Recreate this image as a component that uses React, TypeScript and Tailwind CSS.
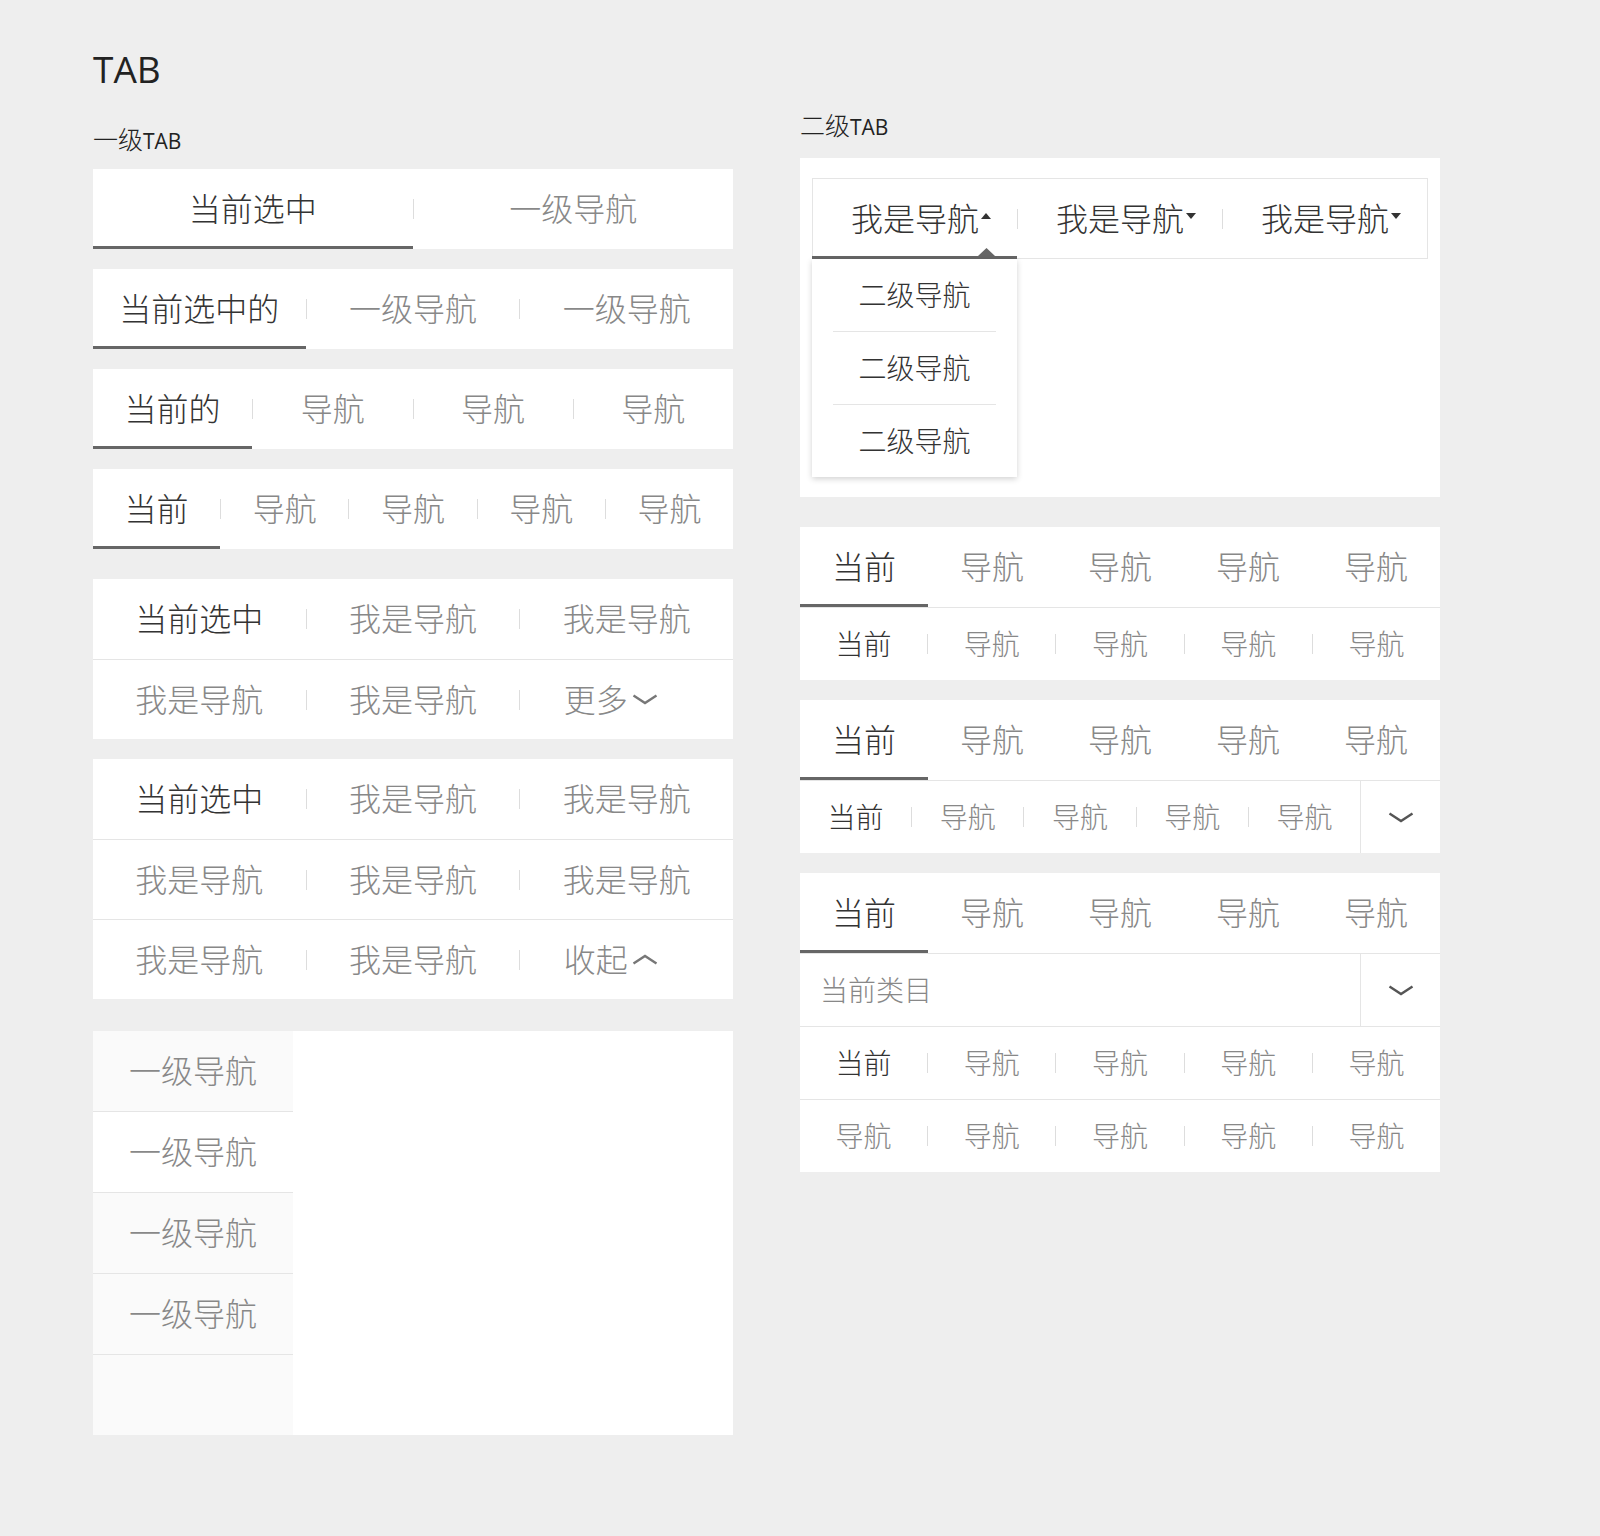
import { Fragment, type ReactNode } from "react"

const Sep = () => <div className="h-5 w-px shrink-0 bg-[#dddddd]" />

type RowProps = {
  items: ReactNode[]
  active?: number
  underline?: boolean
  sep?: boolean
  size?: string
  h?: string
  className?: string
}

const Row = ({ items, active = -1, underline = false, sep = true, size = "text-[32px]", h = "h-20", className = "" }: RowProps) => {
  return (
    <div className={`flex ${h} items-center bg-white ${className}`}>
      {items.map((t, i) => (
        <Fragment key={i}>
          {i > 0 && sep && <Sep />}
          <div
            className={`flex h-full min-w-0 flex-1 basis-0 items-center justify-center border-y-[3px] border-t-transparent ${size} ${
              i === active ? "text-[#333333]" : "text-[#888888]"
            } ${underline && i === active ? "border-b-[#666666]" : "border-b-transparent"}`}
          >
            {t}
          </div>
        </Fragment>
      ))}
    </div>
  )
}

const ChevronDown = ({ className = "" }: { className?: string }) => (
  <svg width="26" height="11" viewBox="0 0 26 11" className={className}>
    <path d="M1.5 1.5 L13 9 L24.5 1.5" fill="none" stroke="currentColor" strokeWidth="2.4" />
  </svg>
)

const ChevronUp = ({ className = "" }: { className?: string }) => (
  <svg width="26" height="11" viewBox="0 0 26 11" className={className}>
    <path d="M1.5 9.5 L13 2 L24.5 9.5" fill="none" stroke="currentColor" strokeWidth="2.4" />
  </svg>
)

const ChevronBox = () => (
  <div className="flex h-full w-[80px] shrink-0 items-center justify-center border-l border-[#e5e5e5] bg-white text-[#555555]">
    <ChevronDown />
  </div>
)

const More = ({ label, up }: { label: string; up?: boolean }) => (
  <div className="flex w-[126px] items-center">
    {label}
    {up ? <ChevronUp className="ml-1 text-[#777777]" /> : <ChevronDown className="ml-1 text-[#777777]" />}
  </div>
)

const Tri = ({ up }: { up?: boolean }) => (
  <svg width="10" height="6" viewBox="0 0 10 6" className="mb-[5px] ml-0.5 text-[#333333]">
    <polygon points={up ? "0,6 5,0 10,6" : "0,0 10,0 5,6"} fill="currentColor" />
  </svg>
)

const Label = ({ cjk }: { cjk: string }) => (
  <div className="h-7 text-[21px] leading-7 text-[#222222]">
    <span className="text-[25px] font-light">{cjk}</span>
    <span className="font-normal">TAB</span>
  </div>
)

const nav5 = ["当前", "导航", "导航", "导航", "导航"]

export default function App() {
  return (
    <div className="flex min-h-screen gap-[67px] bg-[#eeeeee] pl-[93px] pt-[45px] font-['Open_Sans','Noto_Sans_CJK_SC',sans-serif] font-light text-[#333333]">
      {/* left column */}
      <div className="flex w-[640px] flex-col">
        <h1 className="h-12 text-[37px] font-normal leading-[48px] text-[#222222]">TAB</h1>
        <div className="mt-8">
          <Label cjk="一级" />
        </div>

        <div className="mt-4 flex flex-col">
          <Row items={["当前选中", "一级导航"]} active={0} underline />
          <Row className="mt-5" items={["当前选中的", "一级导航", "一级导航"]} active={0} underline />
          <Row className="mt-5" items={["当前的", "导航", "导航", "导航"]} active={0} underline />
          <Row className="mt-5" items={nav5} active={0} underline />

          <div className="mt-[30px] flex flex-col bg-white">
            <Row items={["当前选中", "我是导航", "我是导航"]} active={0} />
            <Row className="border-t border-[#e5e5e5]" items={["我是导航", "我是导航", <More label="更多" />]} />
          </div>

          <div className="mt-5 flex flex-col bg-white">
            <Row items={["当前选中", "我是导航", "我是导航"]} active={0} />
            <Row className="border-t border-[#e5e5e5]" items={["我是导航", "我是导航", "我是导航"]} />
            <Row className="border-t border-[#e5e5e5]" items={["我是导航", "我是导航", <More label="收起" up />]} />
          </div>

          <div className="mt-[32px] flex h-[404px] bg-white">
            <div className="flex w-[200px] flex-col bg-[#fafafa] text-[32px] text-[#888888]">
              {["一级导航", "一级导航", "一级导航", "一级导航"].map((t, i) => (
                <div
                  key={i}
                  className={`flex h-[81px] shrink-0 items-center justify-center border-b border-[#e5e5e5] ${i === 1 ? "bg-white" : ""}`}
                >
                  {t}
                </div>
              ))}
            </div>
            <div className="flex-1" />
          </div>
        </div>
      </div>

      {/* right column */}
      <div className="mt-[66px] flex w-[640px] flex-col">
        <Label cjk="二级" />

        <div className="relative mt-[19px] h-[339px] bg-white px-3 pt-5">
          <div className="relative flex h-[81px] items-center border border-[#e5e5e5] text-[32px] text-[#333333]">
            {[true, false, false].map((up, i) => (
              <Fragment key={i}>
                {i > 0 && <Sep />}
                <div className="flex h-full flex-1 basis-0 items-center justify-center pl-3">
                  我是导航
                  <Tri up={up} />
                </div>
              </Fragment>
            ))}
            <div className="absolute -bottom-px -left-px h-[3px] w-[205px] bg-[#666666]" />
            <svg width="17" height="8" viewBox="0 0 17 8" className="absolute bottom-[2px] left-[165px] text-[#666666]">
              <polygon points="0,8 8.5,0 17,8" fill="currentColor" />
            </svg>
            <div className="absolute -left-px top-[80px] z-10 flex w-[205px] flex-col bg-white text-[28px] text-[#333333] shadow-[0_2px_6px_rgba(0,0,0,0.18)]">
              {["二级导航", "二级导航", "二级导航"].map((t, i) => (
                <Fragment key={i}>
                  {i > 0 && <div className="mx-[21px] h-px bg-[#e5e5e5]" />}
                  <div className="flex h-[72px] items-center justify-center">{t}</div>
                </Fragment>
              ))}
            </div>
          </div>
        </div>

        <div className="mt-[30px] flex flex-col bg-white">
          <Row items={nav5} active={0} underline sep={false} />
          <Row className="border-t border-[#e5e5e5]" items={nav5} active={0} size="text-[28px]" h="h-[73px]" />
        </div>

        <div className="mt-5 flex flex-col bg-white">
          <Row items={nav5} active={0} underline sep={false} />
          <div className="flex h-[73px] border-t border-[#e5e5e5]">
            <Row className="flex-1" items={nav5} active={0} size="text-[28px]" h="h-full" />
            <ChevronBox />
          </div>
        </div>

        <div className="mt-5 flex flex-col bg-white">
          <Row items={nav5} active={0} underline sep={false} />
          <div className="flex h-[73px] items-center border-t border-[#e5e5e5]">
            <div className="flex-1 pl-5 text-[28px] text-[#888888]">当前类目</div>
            <ChevronBox />
          </div>
          <Row className="border-t border-[#e5e5e5]" items={nav5} active={0} size="text-[28px]" h="h-[73px]" />
          <Row className="border-t border-[#e5e5e5]" items={["导航", "导航", "导航", "导航", "导航"]} size="text-[28px]" h="h-[73px]" />
        </div>
      </div>
    </div>
  )
}
